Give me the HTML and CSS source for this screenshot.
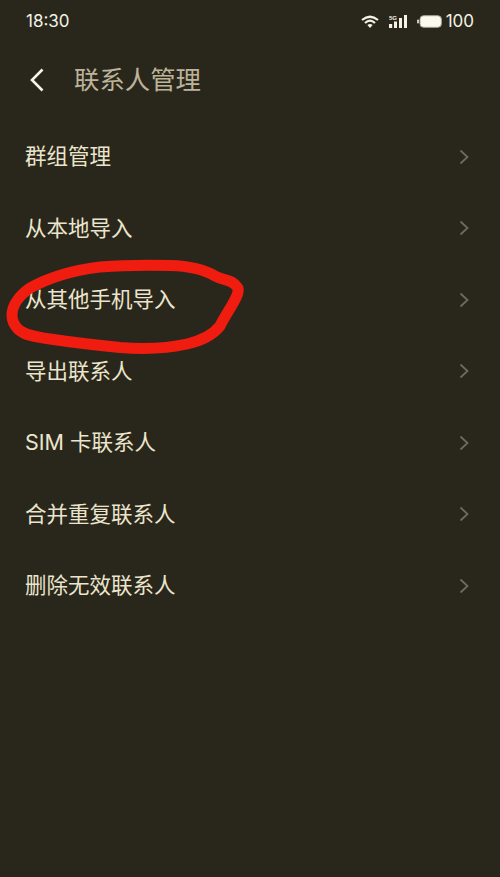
FILE: index.html
```html
<!DOCTYPE html>
<html lang="zh-CN">
<head>
<meta charset="utf-8">
<title>联系人管理</title>
<link rel="stylesheet" href="styles.css">
</head>
<body>
<div class="screen">
  <div class="status">
    <span class="time">18:30</span>
    <div class="status-right">
      <svg class="wifi" width="18" height="13" viewBox="0 0 18 13"><path d="M1 5 Q9 -1.5 17 5 M4 8 Q9 3.2 14 8" fill="none" stroke="#f4f1e6" stroke-width="2.2"/><path d="M6.4 10 Q9 8 11.6 10 L9 13 Z" fill="#f4f1e6"/></svg>
      <svg class="cell" width="18" height="13" viewBox="0 0 18 13"><g fill="#f4f1e6"><rect x="0" y="9" width="3.2" height="4"/><rect x="5" y="6.5" width="3" height="6.5"/><rect x="10" y="3" width="3" height="10"/><rect x="15" y="0" width="3" height="13"/><text class="net" x="0" y="5.2">5G</text></g></svg>
      <svg class="batt" width="25" height="13" viewBox="0 0 25 13"><rect x=".2" y="4.5" width="1.6" height="4" rx=".8" fill="#f4f1e6"/><rect x="3" y=".7" width="21.4" height="11.6" rx="3.6" fill="#fbf9ee" stroke="#a9a69a" stroke-width="1"/></svg>
      <span class="pct">100</span>
    </div>
  </div>
  <header class="bar">
    <svg class="back" width="16" height="26" viewBox="0 0 16 26"><path d="M13.5 2.5 L3 13 L13.5 23.5" fill="none" stroke="#f6f3e8" stroke-width="2.6"/></svg>
    <h1 class="title">联系人管理</h1>
  </header>
  <ul class="list">
    <li class="row"><span>群组管理</span><svg class="chev" width="10" height="16" viewBox="0 0 10 16"><path d="M1.5 1.5 L8.5 8 L1.5 14.5" fill="none" stroke="#6d6b5e" stroke-width="1.8"/></svg></li>
    <li class="row"><span>从本地导入</span><svg class="chev" width="10" height="16" viewBox="0 0 10 16"><path d="M1.5 1.5 L8.5 8 L1.5 14.5" fill="none" stroke="#6d6b5e" stroke-width="1.8"/></svg></li>
    <li class="row"><span>从其他手机导入</span><svg class="chev" width="10" height="16" viewBox="0 0 10 16"><path d="M1.5 1.5 L8.5 8 L1.5 14.5" fill="none" stroke="#6d6b5e" stroke-width="1.8"/></svg></li>
    <li class="row"><span>导出联系人</span><svg class="chev" width="10" height="16" viewBox="0 0 10 16"><path d="M1.5 1.5 L8.5 8 L1.5 14.5" fill="none" stroke="#6d6b5e" stroke-width="1.8"/></svg></li>
    <li class="row"><span>SIM 卡联系人</span><svg class="chev" width="10" height="16" viewBox="0 0 10 16"><path d="M1.5 1.5 L8.5 8 L1.5 14.5" fill="none" stroke="#6d6b5e" stroke-width="1.8"/></svg></li>
    <li class="row"><span>合并重复联系人</span><svg class="chev" width="10" height="16" viewBox="0 0 10 16"><path d="M1.5 1.5 L8.5 8 L1.5 14.5" fill="none" stroke="#6d6b5e" stroke-width="1.8"/></svg></li>
    <li class="row"><span>删除无效联系人</span><svg class="chev" width="10" height="16" viewBox="0 0 10 16"><path d="M1.5 1.5 L8.5 8 L1.5 14.5" fill="none" stroke="#6d6b5e" stroke-width="1.8"/></svg></li>
  </ul>
  <svg class="scribble" width="500" height="877" viewBox="0 0 500 877"><path d="M12 315 C12 305 20 295 30 288 C50 277 75 270 100 267 C125 265 150 265 170 265.5 C190 266 205 270 215 276 C224 281 232 279 238 288 C240 296 228 310 220 326 C212 336 200 341 187 344 C165 349 140 349 120 347.5 C95 345 70 342 50 339 C35 337 24 335 18 329 C14 325 12 320 12 315 Z" fill="none" stroke="#f01c10" stroke-width="11" stroke-linejoin="round"/></svg>
</div>
</body>
</html>
```
FILE: styles.css
```css
* { box-sizing: border-box; }
html, body { margin: 0; padding: 0; }
body { background: #29271b; font-family: "Inter", "Noto Sans CJK SC", sans-serif; }
.screen { position: relative; width: 500px; height: 877px; overflow: hidden; background: #29271b; }
.status { display: flex; justify-content: space-between; align-items: center; height: 42px; padding: 0 26px 0 26px; color: #f4f1e6; }
.time { font-size: 17px; }
.status-right { display: flex; align-items: center; }
.wifi { margin-right: 10px; }
.cell { margin-right: 10px; }
.net { font-size: 6px; font-weight: 700; font-family: "Liberation Sans", sans-serif; }
.batt { margin-right: 4px; }
.pct { font-size: 17px; }
.bar { display: flex; align-items: center; height: 76px; padding-left: 29px; }
.back { margin-right: 29px; }
.title { margin: -3px 0 0; font-size: 25.4px; font-weight: 400; color: #bdb39a; font-family: "Noto Sans CJK SC", sans-serif; line-height: 1; }
.list { list-style: none; margin: 2px 0 0; padding: 0 31px 0 25px; }
.row { display: flex; justify-content: space-between; align-items: center; height: 71.5px; font-size: 21.5px; color: #ece5cd; font-family: "Inter", "Noto Sans CJK SC", sans-serif; }
.row span { margin-top: -2px; }
.chev { margin-top: 2px; }
.scribble { position: absolute; left: 0; top: 0; pointer-events: none; }
```
